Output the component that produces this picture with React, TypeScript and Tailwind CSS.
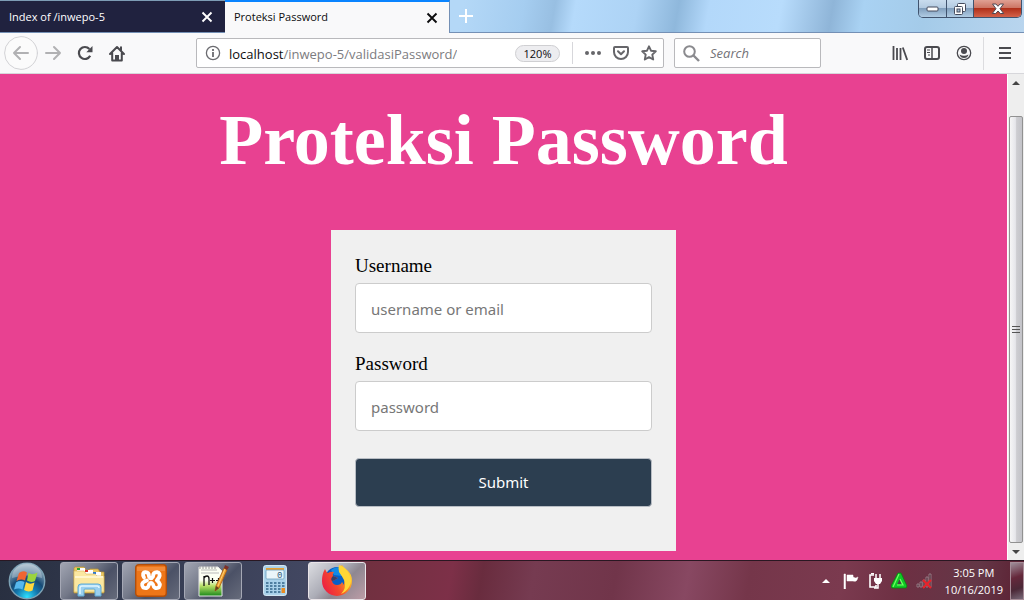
import React from "react";

const inputClass =
    "w-full h-[50px] px-[15px] pt-[2px] rounded-[4px] border border-[#cccccc] bg-white text-[15px] text-[#333] placeholder:text-[#777777] outline-none font-['Noto_Sans','Open_Sans',sans-serif]";

function CloseIcon() {
    return (
        <svg width="12" height="12" viewBox="0 0 12 12" fill="none" stroke="currentColor" strokeWidth="1.9">
            <path d="M1.5 1.5l9 9M10.5 1.5l-9 9" />
        </svg>
    );
}

function TabStrip() {
    return (
        <header className="relative flex h-[33px] shrink-0 border-b border-[#7490b5] bg-[linear-gradient(100deg,#b4d8f7_0%,#b4d8f7_45%,#a5cdf0_51%,#98bfe2_54%,#b5dafb_56%,#add3f5_62%,#8fb8dc_66%,#b3d8fa_69%,#b8dcfc_76%,#8fb5d8_81%,#a9d2f3_84%,#a4cbe9_90%,#b9d5ee_100%)]">
            <div className="flex w-[225px] items-center justify-between border-t border-[#7d9cb5] bg-[#20223f] pl-[9px] pr-3 pt-px text-white">
                <span className="text-[11px]">Index of /inwepo-5</span>
                <button aria-label="Close Index of /inwepo-5"><CloseIcon /></button>
            </div>
            <div className="-mb-px flex w-[225px] items-center justify-between border-r border-t-2 border-r-[#7490b5] border-t-[#0a84ff] bg-[#f9f9fa] pl-[9px] pr-[11px] text-[#0c0c0d]">
                <span className="text-[11px]">Proteksi Password</span>
                <button aria-label="Close Proteksi Password"><CloseIcon /></button>
            </div>
            <button aria-label="New tab" className="flex w-8 items-center justify-center text-white">
                <svg width="14" height="14" viewBox="0 0 14 14" fill="none" stroke="currentColor" strokeWidth="2">
                    <path d="M7 0v14M0 7h14" />
                </svg>
            </button>
            <div className="ml-auto mr-[2px] flex h-[18px] overflow-hidden rounded-b-[5px] border border-t-0 border-[#40536e]">
                <button aria-label="Minimize" className="flex w-[28px] items-center justify-center border-r border-[#40536e] bg-[linear-gradient(#c9dcee_0%,#b4cbe1_45%,#819fbd_50%,#b0cce4_100%)]">
                    <svg width="13" height="6" viewBox="0 0 13 6"><rect x="1" y="1" width="11" height="4" rx="1" fill="#fff" stroke="#454b5c" /></svg>
                </button>
                <button aria-label="Restore" className="flex w-[27px] items-center justify-center border-r border-[#40536e] bg-[linear-gradient(#c9dcee_0%,#b4cbe1_45%,#819fbd_50%,#b0cce4_100%)]">
                    <svg width="14" height="14" viewBox="0 0 14 14" stroke="#454b5c" fill="#fff">
                        <rect x="4.500" y="1.500" width="8" height="8" rx="1" />
                        <rect x="1.500" y="4.500" width="8" height="8" rx="1" />
                        <rect x="4" y="7" width="3" height="3" fill="#a5bdd5" />
                    </svg>
                </button>
                <button aria-label="Close window" className="flex w-[47px] items-center justify-center bg-[linear-gradient(#e0a093_0%,#cd7665_45%,#b0301a_50%,#d4624a_100%)]">
                    <svg width="14" height="12" viewBox="0 0 14 12">
                        <path d="M1.500 1h3.400L7 3.300 9.100 1h3.400L9 5.700l3.700 4.800H9.300L7 8l-2.300 2.500H1.300L5 5.700z" fill="#fff" stroke="#4d4752" />
                    </svg>
                </button>
            </div>
        </header>
    );
}

function NavButton({ label, children }: { label: string; children: React.ReactNode }) {
    return (
        <button aria-label={label} className="flex h-8 w-8 shrink-0 items-center justify-center">
            {children}
        </button>
    );
}

function Toolbar() {
    return (
        <nav className="flex h-[41px] shrink-0 items-center border-b border-[#d7d7db] bg-[#f9f9fa] text-[#4a4a4f]">
            <div className="flex items-center pl-1">
                <button aria-label="Back" className="flex h-[33px] w-[33px] items-center justify-center text-[#b1b1b3]">
                    <svg className="shrink-0" width="34" height="34" viewBox="0 0 34 34" fill="none" stroke="currentColor" strokeWidth="2" strokeLinecap="round" strokeLinejoin="round">
                        <circle cx="17" cy="17" r="16.400" stroke="#d2d2d5" strokeWidth="1" fill="#fbfbfb" />
                        <path d="M24 17H10M16 11l-6 6 6 6" />
                    </svg>
                </button>
                <span className="text-[#b1b1b3]">
                    <NavButton label="Forward">
                        <svg width="18" height="16" viewBox="0 0 18 16" fill="none" stroke="currentColor" strokeWidth="2" strokeLinecap="round" strokeLinejoin="round">
                            <path d="M2 8h14M10 2l6 6-6 6" />
                        </svg>
                    </NavButton>
                </span>
                <NavButton label="Reload">
                    <svg width="18" height="16" viewBox="0 0 18 16" fill="none" stroke="currentColor" strokeWidth="2.200">
                        <path d="M14.200 10.800A6 6 0 1 1 13.400 4" />
                        <path d="M16.500 1v6.200h-6.200z" fill="currentColor" stroke="none" />
                    </svg>
                </NavButton>
                <NavButton label="Home">
                    <svg width="18" height="17" viewBox="0 0 18 17" fill="none" stroke="currentColor" strokeWidth="2" strokeLinejoin="round" strokeLinecap="round">
                        <path d="M2 9l7-7 7 7M4.200 8v7.500h9.600V8" />
                        <path d="M7 15v-5h4v5z" fill="currentColor" stroke="none" />
                        <path d="M13 2.200V5" />
                    </svg>
                </NavButton>
            </div>
            <div className="ml-[63px] flex h-[30px] min-w-0 flex-1 items-center rounded-[2px] border border-[#b9b9bc] bg-white pl-2 pr-[6px]">
                <svg width="16" height="16" viewBox="0 0 16 16" fill="none" stroke="#6b6b70">
                    <circle cx="8" cy="8" r="6.600" strokeWidth="1.300" />
                    <path d="M8 7v5M8 4v2" strokeWidth="1.800" />
                </svg>
                <a href="#" className="ml-2 truncate pt-px text-[13px] leading-5 text-[#7c7c80]">
                    <span className="text-[#0c0c0d]">localhost</span>/inwepo-5/validasiPassword/
                </a>
                <button className="ml-auto h-[17px] w-[45px] shrink-0 rounded-full border border-[#cfcfd2] bg-[#ededf0] text-[11px] leading-[15px] text-[#0c0c0d]">120%</button>
                <span className="ml-3 h-[22px] w-px bg-[#d7d7db]" />
                <div className="ml-3 flex items-center gap-3">
                    <button aria-label="Page actions">
                        <svg width="16" height="16" viewBox="0 0 16 16" fill="#66666a"><circle cx="2" cy="8" r="2" /><circle cx="8" cy="8" r="2" /><circle cx="14" cy="8" r="2" /></svg>
                    </button>
                    <button aria-label="Save to Pocket">
                        <svg width="16" height="16" viewBox="0 0 16 16" fill="none" stroke="#66666a" strokeWidth="2" strokeLinecap="round" strokeLinejoin="round">
                            <path d="M2 2h12a1 1 0 0 1 1 1v4A7 7 0 0 1 1 7V3a1 1 0 0 1 1-1z" />
                            <path d="M5 6.300l3 2.900 3-2.900" />
                        </svg>
                    </button>
                    <button aria-label="Bookmark">
                        <svg width="16" height="16" viewBox="0 0 16 16" fill="none" stroke="#66666a" strokeWidth="1.900" strokeLinejoin="round">
                            <path d="M8 1.300l2 4.400 4.800.6-3.500 3.300.9 4.900L8 12.100l-4.200 2.400.9-4.900L1.200 6.300 6 5.700z" />
                        </svg>
                    </button>
                </div>
            </div>
            <label className="ml-[10px] flex h-[30px] w-[147px] items-center rounded-[2px] border border-[#b9b9bc] bg-white pl-2">
                <svg className="shrink-0" width="17" height="17" viewBox="0 0 17 17" fill="none" stroke="#8a8a8e" strokeWidth="2">
                    <circle cx="6.500" cy="6.500" r="5.300" />
                    <path d="M10.500 10.500l5.500 5.500" strokeWidth="2.400" />
                </svg>
                <input type="search" aria-label="Search" placeholder="Search" className="ml-[10px] h-full min-w-0 flex-1 bg-transparent text-[13px] italic outline-none placeholder:text-[#737378]" />
            </label>
            <div className="ml-[63px] flex items-center">
                <NavButton label="Library">
                    <svg width="16" height="16" viewBox="0 0 16 16" fill="none" stroke="currentColor" strokeWidth="1.800">
                        <path d="M1.500 1v14M5 3v12M8.500 3v12M10.800 2.500L15.200 15" />
                    </svg>
                </NavButton>
                <NavButton label="Sidebars">
                    <svg width="16" height="16" viewBox="0 0 16 16" fill="none" stroke="currentColor">
                        <rect x="1" y="2" width="14" height="12" rx="2" strokeWidth="2" />
                        <path d="M8 2v12" strokeWidth="1.500" />
                        <path d="M3 5h3M3 7.500h3M4 10h2" />
                    </svg>
                </NavButton>
                <NavButton label="Account">
                    <svg width="16" height="16" viewBox="0 0 16 16" fill="currentColor">
                        <circle cx="8" cy="8" r="6.700" fill="none" stroke="currentColor" strokeWidth="1.300" />
                        <circle cx="8" cy="6" r="3" />
                        <path d="M3.500 9.500q4.500 2.500 9 0Q11.500 13 8 13t-4.500-3.500z" />
                    </svg>
                </NavButton>
                <span className="ml-[3px] h-[33px] w-px bg-[#dcdcdf]" />
                <div className="pl-[5px] pr-[3px]">
                    <NavButton label="Open menu">
                        <svg width="12" height="12" viewBox="0 0 12 12" stroke="currentColor" strokeWidth="2"><path d="M0 1h12M0 6h12M0 11h12" /></svg>
                    </NavButton>
                </div>
            </div>
        </nav>
    );
}

function LoginForm() {
    return (
        <form onSubmit={(e) => e.preventDefault()} className="mx-auto mt-6 w-[345px] bg-[#f0f0f0] px-6 pb-11 pt-[25px] font-['Liberation_Serif',serif]">
            <div className="flex flex-col gap-[6px]">
                <label htmlFor="username" className="text-[19px] leading-[22px] text-black">Username</label>
                <input id="username" type="text" placeholder="username or email" className={inputClass} />
            </div>
            <div className="mt-5 flex flex-col gap-[6px]">
                <label htmlFor="password" className="text-[19px] leading-[22px] text-black">Password</label>
                <input id="password" type="password" placeholder="password" className={inputClass} />
            </div>
            <button type="submit" className="mt-[27px] h-[49px] w-full rounded-[4px] border border-[#b8bdc4] bg-[#2c3e50] font-['Noto_Sans','Open_Sans',sans-serif] text-[15px] text-white">
                Submit
            </button>
        </form>
    );
}

function Scrollbar() {
    return (
        <div className="flex w-[17px] shrink-0 flex-col items-center border-l border-white bg-[#eeeeee]">
            <svg className="shrink-0" width="16" height="17" viewBox="0 0 16 17"><path d="M4 11l4-4 4 4z" fill="#444" /></svg>
            <div className="h-[25px] shrink-0" />
            <div className="flex w-[14px] flex-1 items-center justify-center rounded-[2px] border border-[#919191] bg-[linear-gradient(90deg,#f6f6f6,#e6e6ea_45%,#cdcdd1_55%,#c3c3c8)]">
                <svg width="8" height="9" viewBox="0 0 8 9" stroke="#555"><path d="M0 1.500h8M0 4.500h8M0 7.500h8" /></svg>
            </div>
            <svg className="shrink-0" width="16" height="17" viewBox="0 0 16 17"><path d="M4 7l4 4 4-4z" fill="#444" /></svg>
        </div>
    );
}

function FolderIcon() {
    return (
        <svg width="34" height="32" viewBox="0 0 34 32">
            <path d="M2 3l1-1h9l2 3h3l1-1h8l2 3h4v21H2z" fill="#e9c763" stroke="#b89337" strokeWidth=".7" />
            <path d="M5 3h8v4H5zM13 5h8v4h-8zM21 7h8v4h-8z" fill="#fff" />
            <path d="M5 3h3v2H5z" fill="#2aa532" /><path d="M13 5h3v2h-3z" fill="#d42f25" /><path d="M21 7h3v2h-3z" fill="#2c79d3" />
            <path d="M2 6h10l2 3h9l2 2h7v16H2z" fill="#fbe7a0" stroke="#d6b55c" strokeWidth=".6" />
            <path d="M3 12h28" stroke="#fff5cb" strokeWidth="2" />
            <path d="M6 31v-9q0-3 3-3h17q3 0 3 3v9h-6v-6q0-1-1-1h-9q-1 0-1 1v6z" fill="#9bd0ef" stroke="#5eabd7" />
            <path d="M8 29v-6q0-2 2-2h15q2 0 2 2" stroke="#dff5ff" strokeWidth="1.500" fill="none" />
        </svg>
    );
}

function XamppIcon() {
    return (
        <svg width="32" height="33" viewBox="0 0 32 33">
            <rect x=".7" y=".7" width="30.600" height="31.600" rx="3" fill="#ee7618" stroke="#b24e0a" strokeWidth="1.400" />
            <path d="M2 3h28v4H2z" fill="#f59a50" opacity=".6" />
            <path d="M9 13.500Q6.500 8.500 10.500 8.200Q14 8.200 14 12.500Q16 16 18 12.500Q18 8.200 22 8.200Q26 9 24 13.500L21.800 16.300Q26.500 20 23.800 23.500Q19 25.500 18 20.500Q16 17.500 14 20.500Q13 25.500 8.200 23.500Q5.500 19.500 9.500 17.500L12 16.500" fill="none" stroke="#fff" strokeWidth="3.800" strokeLinejoin="round" strokeLinecap="round" />
        </svg>
    );
}

function NotepadIcon() {
    return (
        <svg width="32" height="34" viewBox="0 0 32 34">
            <defs>
                <linearGradient id="notepad" x1="0" x2="0" y1="0" y2="1">
                    <stop offset=".45" stopColor="#fcfff3" /><stop offset=".65" stopColor="#b8df67" /><stop offset="1" stopColor="#198719" />
                </linearGradient>
            </defs>
            <path d="M2 3h19l4 4v25H2z" fill="url(#notepad)" stroke="#e4e4e4" />
            <path d="M4 6h16M4 9h18" stroke="#b9b9b9" />
            <path d="M3 2v3M6 2v3M9 2v3M12 2v3M15 2v3M18 2v3" stroke="#999" />
            <path d="M7 22V12M7 14q1-2 3-2t2 3v6" stroke="#111" strokeWidth="1.300" fill="none" />
            <path d="M13 16.500h5M15.500 14v5M19 16.500h5M21.500 14v5" stroke="#111" strokeWidth="1.200" />
            <path d="M18 27l1-5L27 4l3 2-8 18z" fill="#eda031" stroke="#a85b12" strokeWidth=".8" />
            <path d="M18 27l1-5 3 2z" fill="#654321" /><path d="M27 4l1-3 4 2-2 3z" fill="#7c3029" />
            <path d="M21 22l7-17" stroke="#ffcf72" />
        </svg>
    );
}

function CalculatorIcon() {
    return (
        <svg width="24" height="31" viewBox="0 0 24 31">
            <rect x=".6" y=".6" width="22.800" height="29.800" rx="2" fill="#a9d1e9" stroke="#dceffa" />
            <path d="M3 3h18v2H3z" fill="#e89e30" />
            <rect x="3" y="5" width="18" height="9" rx="1" fill="#e9f5fa" stroke="#6da0bd" strokeWidth=".8" />
            <text x="14" y="12.500" fontSize="9" fontFamily="Liberation Mono" fill="#335b78">0</text>
            {[17, 20, 23, 26].map((y) =>
                [3, 7, 11, 15, 19].map((x) => <rect key={`${x}-${y}`} x={x} y={y} width="2.500" height="2" fill="#4f7fa0" />)
            )}
            <path d="M18.500 23h3.500v5h-3.500z" fill="#e98b20" />
        </svg>
    );
}

function FirefoxIcon() {
    return (
        <svg width="32" height="32" viewBox="0 0 32 32">
            <defs>
                <linearGradient id="fox" x1="0" x2="1" y1=".7" y2=".2">
                    <stop stopColor="#ec1e43" /><stop offset=".4" stopColor="#f4482e" /><stop offset=".72" stopColor="#fb9525" /><stop offset="1" stopColor="#ffe23b" />
                </linearGradient>
            </defs>
            <circle cx="16" cy="14" r="12" fill="#075fc7" />
            <path d="M10 5q6-5 12-1l-1 7-8-1z" fill="#148ae4" />
            <path d="M4 4q1 3 3 4 3-2 6-1-2 2-1 4l5 2-3 2-3 1q1 4 5 4 4 0 5-3 2 2 0 4 4-3 2-9-1-3-4-6-2-3 2-6 2 3 5 5 5 4 5 11a15 15 0 0 1-30 0Q1 9 4 4z" fill="url(#fox)" />
            <path d="M18 0q7 2 10 9 4 7 0 13-3 5-8 7 6-6 3-14-2-4-5-8-1-4 0-7z" fill="#ffd735" />
            <path d="M12 11l5 2-3 2-3 1q-2-2 1-5z" fill="#35416c" />
        </svg>
    );
}

function WindowsOrb() {
    return (
        <svg width="38" height="38" viewBox="0 0 38 38">
            <defs>
                <radialGradient id="orb" cx=".5" cy=".95" r=".9">
                    <stop stopColor="#2ee1ff" /><stop offset=".35" stopColor="#1376ac" /><stop offset=".58" stopColor="#174a75" /><stop offset="1" stopColor="#a7bbc9" />
                </radialGradient>
            </defs>
            <circle cx="19" cy="19" r="17.700" fill="url(#orb)" stroke="#7da2b5" strokeWidth="1.400" />
            <path d="M4 16a15 15 0 0 1 30 0q-15-5-30 0z" fill="#c9d8e0" opacity=".4" />
            <path d="M11 11q4-3 8-.5l-2 8q-4-2-8.500.5z" fill="#ef6532" />
            <path d="M20.500 11q4 2.500 9-.5l-2.500 8.500q-4 2-8-.5z" fill="#9bd43e" />
            <path d="M8 20.500q4-2.500 8.500-.5l-2 7.500q-4-2-8.500 0z" fill="#56b8ee" />
            <path d="M18 20q4 3 8.500.5l-2 8q-4.500 2-8.500-.5z" fill="#ffd83d" />
        </svg>
    );
}

const taskClass = "flex h-[38px] w-[58px] items-center justify-center rounded-[3px] border border-[#a5a8b5] bg-[linear-gradient(135deg,#a1a5b2_0%,#747989_40%,#4b5166_62%,#666b7b_100%)]";

function Taskbar() {
    return (
        <footer className="flex h-10 shrink-0 items-center border-t border-[#291722] bg-[linear-gradient(100deg,#282f40_0%,#353c52_15%,#424761_30%,#713040_36%,#7d3048_44%,#692c3e_47%,#763b51_52%,#71354a_60%,#884862_67%,#75364a_73%,#7b3a4f_82%,#6d3043_88%,#643747_95%,#5b1f31_100%)]">
            <button aria-label="Start" className="flex w-[54px] justify-center"><WindowsOrb /></button>
            <div className="ml-[6px] flex gap-1">
                <button aria-label="File explorer" className={taskClass}><FolderIcon /></button>
                <button aria-label="XAMPP" className={taskClass}><XamppIcon /></button>
                <button aria-label="Notepad++" className={taskClass}><NotepadIcon /></button>
                <button aria-label="Calculator" className="flex h-[38px] w-[58px] items-center justify-center"><CalculatorIcon /></button>
                <button aria-label="Firefox" className="flex h-[38px] w-[58px] items-center justify-center rounded-[3px] border border-[#e9e4e8] bg-[linear-gradient(135deg,#dcdde1_0%,#acadb7_42%,#8e8791_60%,#bd9da7_100%)]"><FirefoxIcon /></button>
            </div>
            <div className="ml-auto flex h-full items-center text-white">
                <div className="mr-3 flex items-center gap-2">
                    <button aria-label="Show hidden icons"><svg width="10" height="16" viewBox="0 0 10 16"><path d="M1 10l4-4 4 4z" fill="#fff" /></svg></button>
                    <svg className="ml-1" width="16" height="16" viewBox="0 0 16 16"><path d="M1 1h1.500v15H1zM4 2h6v6H4zM10 4q3 2 5 0l-1 3q-1 2-4 1z" fill="#fff" stroke="#fff" strokeWidth=".5" /></svg>
                    <svg width="16" height="16" viewBox="0 0 16 16" fill="none" stroke="#fff">
                        <path d="M7 2H3v12h6v-2" strokeWidth="1.600" /><path d="M4 .7h3" strokeWidth="1.500" />
                        <path d="M9 1v4M13 1v4" strokeWidth="1.500" /><path d="M7 5h8v3l-2 3H9L7 8z" fill="#fff" stroke="none" /><path d="M11 11v4H7" strokeWidth="1.500" />
                    </svg>
                    <svg width="17" height="17" viewBox="0 0 17 17"><path d="M7 1h3l6 13-1 2H1l-1-2z" fill="#10c927" stroke="#07870d" strokeWidth=".8" /><path d="M8.500 7L6.500 12h4z" fill="#4c3d49" /><path d="M8 2L2 15M9 7l3 6H6" stroke="#72ff63" strokeWidth="1.200" fill="none" /></svg>
                    <svg width="17" height="16" viewBox="0 0 17 16"><path d="M1 11h2v3H1zM4 9h2v5H4zM7 7h2v7H7zM10 4h2v10h-2zM13 1h2v13h-2z" fill="#4f2a36" stroke="#ab929b" strokeWidth=".7" /><path d="M7 7l8 8M15 7l-8 8" stroke="#e8222a" strokeWidth="2.200" /></svg>
                </div>
                <time className="mr-[7px] text-center text-[11px] leading-[17px]">3:05 PM<br />10/16/2019</time>
                <button aria-label="Show desktop" className="h-[38px] w-[14px] border border-[#a78c97] bg-[linear-gradient(160deg,#9e8e99,#65283b_40%,#4b2837_70%,#786978)]" />
            </div>
        </footer>
    );
}

export default function App() {
    return (
        <div className="flex h-screen flex-col overflow-hidden font-['Open_Sans','Noto_Sans',sans-serif]">
            <TabStrip />
            <Toolbar />
            <div className="flex min-h-0 flex-1">
                <main className="min-w-0 flex-1 overflow-hidden bg-[#e84191] pt-6">
                    <h1 className="pb-6 text-center font-['Liberation_Serif',serif] text-[72px] font-bold leading-[84px] text-white">Proteksi Password</h1>
                    <LoginForm />
                </main>
                <Scrollbar />
            </div>
            <Taskbar />
        </div>
    );
}
